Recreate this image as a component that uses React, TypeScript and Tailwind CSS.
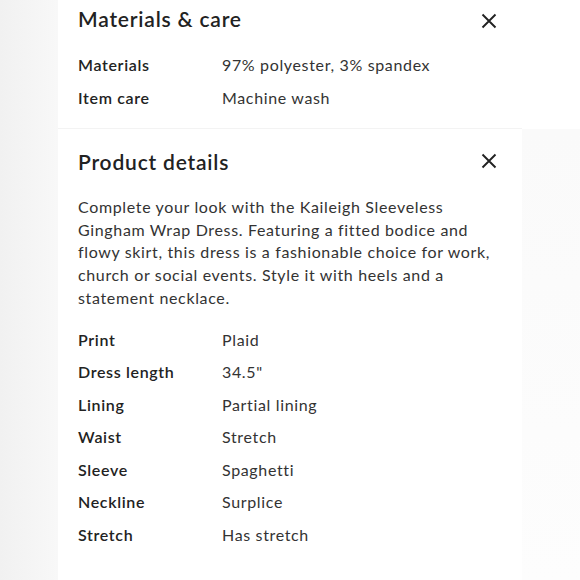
import React from "react";

const XIcon = ({ className = "" }: { className?: string }) => (
  <svg width="16" height="16" viewBox="0 0 16 16" className={className} fill="none">
    <path d="M1.5 1.5 L14.5 14.5 M14.5 1.5 L1.5 14.5" stroke="#222" strokeWidth="1.9" strokeLinecap="butt" />
  </svg>
);

const Row = ({ label, value }: { label: string; value: string }) => (
  <div className="flex leading-[32.5px] text-[16px] tracking-[0.65px]">
    <div className="w-[144px] shrink-0 font-semibold text-[#222]">{label}</div>
    <div className="text-[#333]">{value}</div>
  </div>
);

export default function App() {
  const details: [string, string][] = [
    ["Print", "Plaid"],
    ["Dress length", '34.5"'],
    ["Lining", "Partial lining"],
    ["Waist", "Stretch"],
    ["Sleeve", "Spaghetti"],
    ["Neckline", "Surplice"],
    ["Stretch", "Has stretch"],
  ];
  return (
    <div
      className="w-[580px] h-[580px] flex overflow-hidden bg-white"
      style={{ fontFamily: "Lato, 'Open Sans', sans-serif" }}
    >
      <div className="w-[58px] shrink-0 bg-gradient-to-r from-[#f1f1f1] to-[#f8f8f8]" />
      <div className="flex-1 flex flex-col">
        <div className="flex bg-white">
          <div className="w-[464px] shrink-0 border-b border-[#f3f3f3] pl-[20px] pr-[25px] pt-[5px] pb-[14px]">
            <div className="flex justify-between items-start">
              <h2 className="text-[21px] leading-[28px] font-semibold text-[#222] tracking-[0.8px]">Materials &amp; care</h2>
              <XIcon className="mt-[8px]" />
            </div>
            <div className="mt-[16px]">
              <Row label="Materials" value="97% polyester, 3% spandex" />
              <Row label="Item care" value="Machine wash" />
            </div>
          </div>
          <div className="flex-1 bg-white" />
        </div>
        <div className="flex flex-1">
          <div className="w-[464px] shrink-0 bg-white pl-[20px] pr-[25px] pt-[19px]">
            <div className="flex justify-between items-start">
              <h2 className="text-[21px] leading-[28px] font-semibold text-[#222] tracking-[0.8px]">Product details</h2>
              <XIcon className="mt-[5px]" />
            </div>
            <p className="mt-[20px] text-[16px] leading-[22.7px] text-[#333] tracking-[0.65px] pr-[2px]">
              Complete your look with the Kaileigh Sleeveless Gingham Wrap Dress. Featuring a fitted bodice and
              flowy skirt, this dress is a fashionable choice for work, church or social events. Style it with
              heels and a statement necklace.
            </p>
            <div className="mt-[14px]">
              {details.map(([l, v]) => (
                <Row key={l} label={l} value={v} />
              ))}
            </div>
          </div>
          <div className="flex-1 bg-gradient-to-b from-[#fafafa] to-[#fdfdfd]" />
        </div>
      </div>
    </div>
  );
}
